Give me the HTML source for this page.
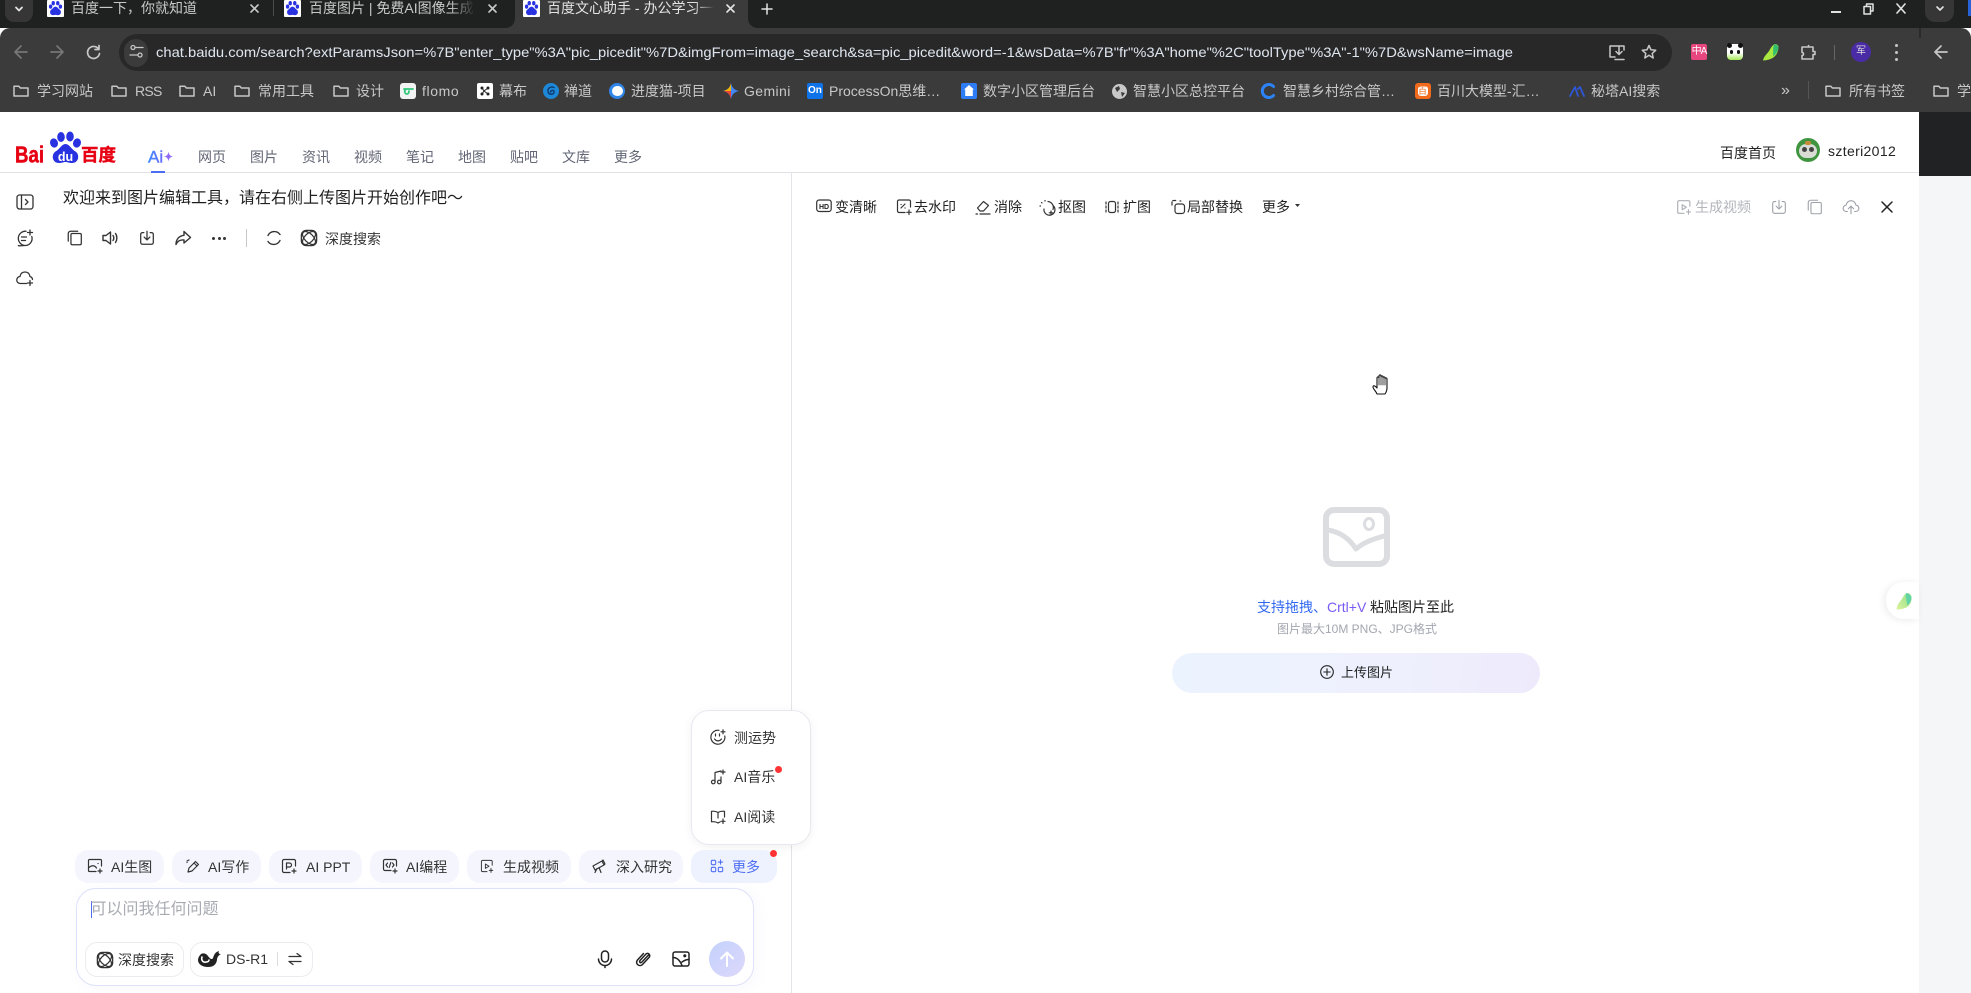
<!DOCTYPE html>
<html lang="zh"><head><meta charset="utf-8"><title>百度文心助手</title>
<style>
html,body{margin:0;padding:0;width:1971px;height:993px;overflow:hidden;background:#fff}
body{position:relative;font:14px/20px "Liberation Sans","Noto Sans CJK SC",sans-serif;color:#1f1f1f}
.b,.t,svg.i{position:absolute}
.t{white-space:nowrap;line-height:20px}
.c{color:#c8c8c8}
.w{color:#333}
.g{fill:none;stroke:#c7c7c7;stroke-width:1.5}
svg.i{fill:none;stroke:#333;stroke-width:1.4;stroke-linecap:round;stroke-linejoin:round;overflow:visible}
.pill{position:absolute;top:850px;height:33px;border-radius:13px;background:#f5f6fd}
</style></head><body>
<svg width="0" height="0" style="position:absolute">
<defs>
<symbol id="paw" viewBox="0 0 18 18"><rect width="18" height="18" rx="1" fill="#fff" stroke="none"/><g fill="#2932e1" stroke="none"><ellipse cx="3.8" cy="7" rx="1.8" ry="2.2"/><ellipse cx="6.6" cy="3.4" rx="1.8" ry="2.3"/><ellipse cx="11.4" cy="3.4" rx="1.8" ry="2.3"/><ellipse cx="14.2" cy="7" rx="1.8" ry="2.2"/><path d="M9 7c2 0 2.700 2 4.500 3.200 1.800 1.300 1.800 5.300-1.200 5.800-1.500.2-2-.3-3.300-.3s-1.800.5-3.300.3c-3-.5-3-4.500-1.200-5.800C6.300 9 7 7 9 7z"/></g></symbol>
<symbol id="folder" viewBox="0 0 18 18"><path class="g" d="M2 4.200h4.800l1.600 1.800H16v8H2z" stroke-linejoin="round"/></symbol>
<symbol id="copy" viewBox="0 0 20 20"><rect x="5.500" y="5" width="11.500" height="12.500" rx="1.500"/><path d="M2.500 13.500V5a2.500 2.500 0 0 1 2.500-2.500H13"/></symbol>
<symbol id="dl" viewBox="0 0 20 20"><path d="M6.500 4H5a2 2 0 0 0-2 2v9a2 2 0 0 0 2 2h10a2 2 0 0 0 2-2V6a2 2 0 0 0-2-2h-1.500M10 2.500v9.500M6.800 9l3.200 3.200L13.200 9"/></symbol>
<symbol id="up" viewBox="0 0 20 20"><path d="M6 15H5a3.500 3.500 0 0 1-.5-7C5 5 7.300 3 10 3s5 2 5.500 5a3.500 3.500 0 0 1-.5 7h-1M10 17.500V9.500M7 12l3-3 3 3"/></symbol>
<symbol id="deep" viewBox="0 0 20 20"><rect x="1.500" y="1.500" width="17" height="17" rx="5.500"/><ellipse cx="10" cy="10" rx="9" ry="4.800" transform="rotate(45 10 10)"/><ellipse cx="10" cy="10" rx="9" ry="4.800" transform="rotate(-45 10 10)"/></symbol>
<symbol id="video" viewBox="0 0 20 20"><path d="M16.500 9V4.500a1.500 1.500 0 0 0-1.500-1.500H4.500A1.500 1.500 0 0 0 3 4.500v11A1.500 1.500 0 0 0 4.500 17H10"/><path d="M8 7.500l4.500 2.800L8 13z"/><path d="M15 13v5M12.800 15.500h4.400" stroke-width="1.200"/></symbol>
</defs>
</svg>

<!-- chrome bars -->
<div class="b" style="left:0;top:0;width:1971px;height:28px;background:#1f2120"></div>
<div class="b" style="left:0;top:28px;width:1971px;height:84px;background:#3b3b3b;border-radius:10px 10px 0 0"></div>
<div class="b" style="left:1919px;top:28px;width:2px;height:10px;background:#2a2b2b"></div>
<div class="b" style="left:5px;top:0;width:28px;height:22px;background:#363636;border-radius:0 0 9px 9px"></div>
<svg class="i" style="left:14px;top:4px;stroke:#e3e3e3;stroke-width:1.800" width="10" height="10" viewBox="0 0 10 10"><path d="M2 3.500l3 3 3-3"/></svg>

<!-- active tab -->
<div class="b" style="left:515px;top:0;width:233px;height:28px;background:#3b3b3b"></div>
<svg class="i" style="left:505px;top:18px;stroke:none;fill:#3b3b3b" width="10" height="10"><path d="M10 0v10H0C6 10 10 6 10 0z"/></svg>
<svg class="i" style="left:748px;top:18px;stroke:none;fill:#3b3b3b" width="10" height="10"><path d="M0 0v10h10C4 10 0 6 0 0z"/></svg>

<svg class="i" style="left:47px;top:0" width="17" height="17"><use href="#paw"/></svg>
<span class="t c" style="left:71px;top:-2px">百度一下，你就知道</span>
<svg class="i" style="left:250px;top:4px;stroke:#c8c8c8;stroke-width:1.600" width="9" height="9"><path d="M1 1l7 7M8 1L1 8"/></svg>
<div class="b" style="left:273px;top:0;width:1px;height:16px;background:#4a4a4a"></div>
<svg class="i" style="left:284px;top:0" width="17" height="17"><use href="#paw"/></svg>
<span class="t c" style="left:309px;top:-2px;width:165px;overflow:hidden">百度图片 | 免费AI图像生成式</span>
<div class="b" style="left:450px;top:0;width:25px;height:20px;background:linear-gradient(90deg,rgba(31,33,32,0),#1f2120)"></div>
<svg class="i" style="left:488px;top:4px;stroke:#c8c8c8;stroke-width:1.600" width="9" height="9"><path d="M1 1l7 7M8 1L1 8"/></svg>
<svg class="i" style="left:523px;top:0" width="17" height="17"><use href="#paw"/></svg>
<span class="t" style="left:547px;top:-2px;color:#e3e3e3;width:166px;overflow:hidden">百度文心助手 - 办公学习一站</span>
<div class="b" style="left:694px;top:0;width:20px;height:20px;background:linear-gradient(90deg,rgba(59,59,59,0),#3b3b3b)"></div>
<svg class="i" style="left:726px;top:4px;stroke:#e3e3e3;stroke-width:1.600" width="9" height="9"><path d="M1 1l7 7M8 1L1 8"/></svg>
<svg class="i" style="left:762px;top:4px;stroke:#e3e3e3;stroke-width:1.500" width="10" height="10"><path d="M5 0v10M0 5h10"/></svg>

<!-- window controls -->
<div class="b" style="left:1831px;top:11px;width:10px;height:2px;background:#e3e3e3"></div>
<svg class="i" style="left:1863px;top:3px;stroke:#e3e3e3;stroke-width:1.500" width="11" height="12"><path d="M3.500 2.500V1h6.500v7H8M1 3.500h6.500v7.500H1z"/></svg>
<svg class="i" style="left:1896px;top:3px;stroke:#e3e3e3;stroke-width:1.600" width="10" height="11"><path d="M1 1l8 9M9 1l-8 9"/></svg>
<div class="b" style="left:1925px;top:0;width:29px;height:22px;background:#363636;border-radius:0 0 10px 10px"></div>
<svg class="i" style="left:1935px;top:4px;stroke:#e3e3e3;stroke-width:1.600" width="10" height="10"><path d="M2 3l3 3 3-3"/></svg>
<div class="b" style="left:1968px;top:0;width:3px;height:16px;background:#2862d9"></div>

<!-- toolbar -->
<svg class="i" style="left:13px;top:44px;stroke:#777;stroke-width:1.700" width="16" height="16"><path d="M14 8H2M8 2L2 8l6 6"/></svg>
<svg class="i" style="left:49px;top:44px;stroke:#777;stroke-width:1.700" width="16" height="16"><path d="M2 8h12M8 2l6 6-6 6"/></svg>
<svg class="i" style="left:85px;top:44px;stroke:#c7c7c7;stroke-width:1.700" width="16" height="16"><path d="M13.500 5A6 6 0 1 0 14.500 9.500M14 1.500V5.500H10"/></svg>
<div class="b" style="left:119px;top:34px;width:1553px;height:37px;background:#282828;border-radius:19px"></div>
<div class="b" style="left:124px;top:39px;width:24px;height:28px;background:#3b3b3b;border-radius:13px"></div>
<svg class="i" style="left:129px;top:44px;stroke:#c7c7c7;stroke-width:1.300" width="15" height="15"><circle cx="4" cy="3.500" r="2"/><path d="M7 3.500h7M1 11h7"/><circle cx="11" cy="11" r="2"/></svg>
<svg class="b" style="left:156px;top:42px;overflow:visible" width="1357" height="20"><text x="0" y="15" textLength="1357" lengthAdjust="spacingAndGlyphs" font-size="14" fill="#dfe6f0" font-family="Liberation Sans,sans-serif">chat.baidu.com/search?extParamsJson=%7B"enter_type"%3A"pic_picedit"%7D&amp;imgFrom=image_search&amp;sa=pic_picedit&amp;word=-1&amp;wsData=%7B"fr"%3A"home"%2C"toolType"%3A"-1"%7D&amp;wsName=image</text></svg>
<svg class="i" style="left:1608px;top:43px;stroke:#c7c7c7;stroke-width:1.500" width="18" height="18"><path d="M16 7V3H2v11h5M11 3v8M8 8.500l3 3 3-3M7 16.500h9"/></svg>
<svg class="i" style="left:1641px;top:44px;stroke:#c7c7c7;stroke-width:1.500" width="16" height="16"><path d="M8 1.500l2 4.300 4.700.5-3.500 3.100 1 4.600L8 11.300l-4.200 2.700 1-4.600L1.300 6.300 6 5.800z"/></svg>
<div class="b" style="left:1691px;top:44px;width:16px;height:16px;border-radius:2px;background:#e8467f"></div>
<span class="t" style="left:1691px;top:42px;width:16px;text-align:center;font-size:10px;color:#fff;letter-spacing:-1px">中A</span>
<div class="b" style="left:1727px;top:44px;width:16px;height:16px;border-radius:4px;background:linear-gradient(#fff 55%,#a6ea58)"></div>
<div class="b" style="left:1727px;top:43px;width:5px;height:5px;border-radius:3px;background:#111"></div>
<div class="b" style="left:1738px;top:43px;width:5px;height:5px;border-radius:3px;background:#111"></div>
<div class="b" style="left:1730px;top:50px;width:3px;height:4px;border-radius:2px;background:#111"></div>
<div class="b" style="left:1737px;top:50px;width:3px;height:4px;border-radius:2px;background:#111"></div>
<svg class="i" style="left:1763px;top:43px;stroke:none" width="16" height="18" viewBox="0 0 16 18"><path d="M0 17.500C1 13 4 11 6 8c2-3 3-6 6-7 2 0 4 2 3.500 3-.5 8-5 13-15.500 13.500z" fill="#a8e83f"/><path d="M11 1.200c2-.3 4.500 1.800 4.500 3-.5 4-2.500 7-5.500 9 .5-4-.5-8 1-12z" fill="#35bd6e"/></svg>
<svg class="i" style="left:1800px;top:44px;stroke:#c7c7c7;stroke-width:1.600" width="16" height="16"><path d="M5 3h3.500v-1.500M8.500 3H13v4.500h2v3h-2V15H2v-3.500c2 0 2-3 0-3V3z" /></svg>
<div class="b" style="left:1834px;top:45px;width:1px;height:15px;background:#666"></div>
<div class="b" style="left:1851px;top:42px;width:20px;height:20px;border-radius:10px;background:#4a2ba6"></div>
<span class="t" style="left:1851px;top:42px;width:20px;text-align:center;font-size:10px;color:#ddd">军</span>
<div class="b" style="left:1895px;top:44px;width:3px;height:3px;border-radius:2px;background:#c7c7c7"></div>
<div class="b" style="left:1895px;top:51px;width:3px;height:3px;border-radius:2px;background:#c7c7c7"></div>
<div class="b" style="left:1895px;top:58px;width:3px;height:3px;border-radius:2px;background:#c7c7c7"></div>
<svg class="i" style="left:1934px;top:45px;stroke:#c7c7c7;stroke-width:1.700" width="14" height="14"><path d="M13 7H1M7 1L1 7l6 6"/></svg>

<!-- bookmarks -->
<svg class="i" style="left:12px;top:82px;stroke:none" width="18" height="18"><use href="#folder"/></svg><span class="t c" style="left:37px;top:81px">学习网站</span>
<svg class="i" style="left:110px;top:82px;stroke:none" width="18" height="18"><use href="#folder"/></svg><span class="t c" style="left:135px;top:81px;letter-spacing:-.7px">RSS</span>
<svg class="i" style="left:178px;top:82px;stroke:none" width="18" height="18"><use href="#folder"/></svg><span class="t c" style="left:203px;top:81px">AI</span>
<svg class="i" style="left:233px;top:82px;stroke:none" width="18" height="18"><use href="#folder"/></svg><span class="t c" style="left:258px;top:81px">常用工具</span>
<svg class="i" style="left:332px;top:82px;stroke:none" width="18" height="18"><use href="#folder"/></svg><span class="t c" style="left:356px;top:81px">设计</span>
<div class="b" style="left:400px;top:83px;width:16px;height:16px;border-radius:3px;background:#f2f2f2"></div><svg class="i" style="left:402px;top:86px;stroke:#30c77b;stroke-width:1.800" width="12" height="10"><path d="M2 3h9M5 3c-3 0-3 5 0 5M5 8c1 0 2-1 2-3"/></svg>
<span class="t c" style="left:422px;top:81px;letter-spacing:.6px">flomo</span>
<div class="b" style="left:477px;top:83px;width:16px;height:16px;border-radius:2px;background:#fff"></div><svg class="i" style="left:480px;top:86px;stroke:#222;stroke-width:1" width="10" height="10"><path d="M2 2l2 3 4-3M2 8l2-3 4 3"/><circle cx="2" cy="2" r="1" fill="#222"/><circle cx="8" cy="2" r="1" fill="#222"/><circle cx="2" cy="8" r="1" fill="#222"/><circle cx="8" cy="8" r="1" fill="#222"/></svg>
<span class="t c" style="left:499px;top:81px">幕布</span>
<div class="b" style="left:543px;top:83px;width:16px;height:16px;border-radius:8px;background:#1d88d8"></div><svg class="i" style="left:545px;top:85px;stroke:#0f3d72;stroke-width:1.500" width="12" height="12"><path d="M9 2.500C6 1 2.500 3 3 6.500S8 10 9 7.500 6 4.500 5.500 7"/></svg>
<span class="t c" style="left:564px;top:81px">禅道</span>
<div class="b" style="left:609px;top:83px;width:16px;height:16px;border-radius:8px;background:#2f85e8"></div><div class="b" style="left:612px;top:86px;width:11px;height:10px;border-radius:6px;background:#fff"></div>
<span class="t c" style="left:631px;top:81px">进度猫-项目</span>
<svg class="i" style="left:723px;top:83px;stroke:none" width="16" height="16"><path d="M8 0C8.800 4.500 11.500 7.200 16 8 11.500 8.800 8.800 11.500 8 16 7.200 11.500 4.500 8.800 0 8 4.500 7.200 7.200 4.500 8 0z" fill="#4285f4"/><path d="M0 8C4.500 7.200 7.200 4.500 8 0V8z" fill="#f4b400"/><path d="M0 8C4.500 8.800 7.200 11.500 8 16V8z" fill="#ea4335"/></svg>
<span class="t c" style="left:744px;top:81px;letter-spacing:.4px">Gemini</span>
<div class="b" style="left:807px;top:83px;width:16px;height:16px;border-radius:2px;background:#0e73e8"></div><span class="t" style="left:808px;top:81px;font-size:10px;font-weight:700;color:#fff">On</span>
<span class="t c" style="left:829px;top:81px">ProcessOn思维…</span>
<div class="b" style="left:961px;top:83px;width:16px;height:16px;border-radius:2px;background:#2e7cf6"></div><svg class="i" style="left:964px;top:85px;stroke:none;fill:#fff" width="10" height="12"><path d="M5 0l5 4.500H8.800V11H1.200V4.500H0z"/></svg>
<span class="t c" style="left:983px;top:81px">数字小区管理后台</span>
<div class="b" style="left:1112px;top:84px;width:15px;height:15px;border-radius:8px;background:#c9c9c9"></div><svg class="i" style="left:1112px;top:84px;stroke:none;fill:#3b3b3b" width="15" height="15"><path d="M3 4l4-2 1 3-3 3zM9 8l4 1-3 4z"/></svg>
<span class="t c" style="left:1133px;top:81px">智慧小区总控平台</span>
<svg class="i" style="left:1261px;top:83px;stroke:#2b83f6;stroke-width:3" width="16" height="16"><path d="M12.500 3.500A6.500 6.500 0 1 0 12.500 12.500"/></svg>
<span class="t c" style="left:1283px;top:81px">智慧乡村综合管…</span>
<div class="b" style="left:1415px;top:83px;width:16px;height:16px;border-radius:3px;background:#f26b1d"></div><div class="b" style="left:1418px;top:86px;width:10px;height:10px;border-radius:3px;background:#fff"></div><span class="t" style="left:1418px;top:81px;font-size:9px;color:#f26b1d">百</span>
<span class="t c" style="left:1437px;top:81px">百川大模型-汇…</span>
<svg class="i" style="left:1569px;top:85px;stroke:#2f56d9;stroke-width:1.800" width="16" height="12"><path d="M1 11L6 2l3 9M9 4l2-2 4 9"/></svg>
<span class="t c" style="left:1591px;top:81px">秘塔AI搜索</span>
<span class="t c" style="left:1781px;top:81px;font-size:16px">»</span>
<div class="b" style="left:1808px;top:81px;width:1px;height:18px;background:#555"></div>
<svg class="i" style="left:1824px;top:82px;stroke:none" width="18" height="18"><use href="#folder"/></svg><span class="t c" style="left:1849px;top:81px">所有书签</span>
<svg class="i" style="left:1932px;top:82px;stroke:none" width="18" height="18"><use href="#folder"/></svg><span class="t c" style="left:1957px;top:81px">学习</span>

<!-- right outside page -->
<div class="b" style="left:1919px;top:112px;width:52px;height:64px;background:#212224"></div>
<div class="b" style="left:1919px;top:176px;width:52px;height:817px;background:#f5f6f8"></div>

<!-- header -->
<div class="b" style="left:0;top:172px;width:1919px;height:1px;background:#e1e2e6"></div>
<div class="b" style="left:791px;top:173px;width:1px;height:820px;background:#e3e4e8"></div>
<svg class="b" style="left:12px;top:128px;overflow:visible" width="110" height="40">
<text x="3" y="34.500" font-size="23" font-weight="700" fill="#e60012" stroke="#e60012" stroke-width=".5" font-family="Liberation Sans,sans-serif" textLength="29" lengthAdjust="spacingAndGlyphs">Bai</text>
<g fill="#2932e1"><ellipse cx="42" cy="15" rx="3.900" ry="4.700" transform="rotate(-20 42 15)"/><ellipse cx="49" cy="9" rx="3.800" ry="5"/><ellipse cx="58" cy="8.500" rx="3.800" ry="5"/><ellipse cx="65" cy="15" rx="3.900" ry="4.700" transform="rotate(20 65 15)"/><path d="M53.500 16c4 0 5.500 5 10 7.500 4.500 3 3.500 11.500-3.500 11.500-3 0-4.500-1-6.500-1s-3.500 1-6.500 1c-7 0-8-8.500-3.500-11.500 4.500-2.500 6-7.500 10-7.500z"/></g>
<text x="53.500" y="33" font-size="12.500" font-weight="700" fill="#fff" text-anchor="middle" font-family="Liberation Sans,sans-serif">du</text>
<text x="69" y="33" font-size="17.500" font-weight="700" fill="#e60012" stroke="#e60012" stroke-width=".4" font-family="Noto Sans CJK SC,sans-serif">百度</text>
</svg>
<svg class="b" style="left:148px;top:146px;overflow:visible" width="26" height="20"><defs><linearGradient id="ai" x1="0" x2="1"><stop offset="0" stop-color="#3d8bff"/><stop offset="1" stop-color="#6a6cff"/></linearGradient></defs><text x="0" y="16.500" font-size="17" fill="url(#ai)" stroke="url(#ai)" stroke-width=".4" font-family="Liberation Sans,sans-serif">Ai</text><path d="M20.500 5.500c.4 3 1.500 4.500 4.500 5-3 .5-4.100 2-4.500 5-.4-3-1.500-4.500-4.500-5 3-.5 4.100-2 4.500-5z" fill="#8f6cf7"/></svg>
<div class="b" style="left:151px;top:171px;width:14px;height:2px;background:#4e6ef2"></div>
<span class="t" style="left:198px;top:146.500px;color:#626675">网页</span>
<span class="t" style="left:250px;top:146.500px;color:#626675">图片</span>
<span class="t" style="left:302px;top:146.500px;color:#626675">资讯</span>
<span class="t" style="left:354px;top:146.500px;color:#626675">视频</span>
<span class="t" style="left:406px;top:146.500px;color:#626675">笔记</span>
<span class="t" style="left:458px;top:146.500px;color:#626675">地图</span>
<span class="t" style="left:510px;top:146.500px;color:#626675">贴吧</span>
<span class="t" style="left:562px;top:146.500px;color:#626675">文库</span>
<span class="t" style="left:614px;top:146.500px;color:#626675">更多</span>
<span class="t w" style="left:1720px;top:143px;color:#222">百度首页</span>
<div class="b" style="left:1796px;top:138px;width:24px;height:24px;border-radius:12px;background:#3f9440"></div>
<div class="b" style="left:1799px;top:144px;width:18px;height:14px;border-radius:7px;background:#d8dcd4"></div>
<div class="b" style="left:1805px;top:141px;width:6px;height:4px;border-radius:2px;background:#c8893a"></div>
<div class="b" style="left:1802px;top:147px;width:5px;height:5px;border-radius:3px;background:#444"></div>
<div class="b" style="left:1809px;top:147px;width:5px;height:5px;border-radius:3px;background:#444"></div>
<span class="t" style="left:1828px;top:141px;color:#222;letter-spacing:.35px">szteri2012</span>

<!-- left sidebar icons -->
<svg class="i" style="left:16px;top:193px;stroke-width:1.300" width="18" height="18" viewBox="0 0 18 18"><rect x="1" y="2" width="16" height="14" rx="2.500"/><path d="M5.500 2v14M9.500 6.500L12 9l-2.500 2.500"/></svg>
<svg class="i" style="left:16px;top:229px;stroke-width:1.300" width="18" height="18" viewBox="0 0 18 18"><path d="M10 2.200A7 7 0 1 0 9 16.500L3 16.800l-.6-.2M15.800 7.500A7 7 0 0 1 9 16.500M5.500 8h5M5.500 11.500h4M14 1v5M11.500 3.500h5"/></svg>
<svg class="i" style="left:16px;top:269px;stroke-width:1.300" width="18" height="18" viewBox="0 0 18 18"><path d="M10.500 14.500H4.500a3.500 3.500 0 0 1-.5-7C4.500 4.500 6.500 3 9 3s4.500 1.500 5 4.500a3.500 3.500 0 0 1 2.500 3M14 11.500v5M11.500 14h5"/></svg>

<!-- msg -->
<span class="t" style="left:63px;top:189px;font-size:16px;color:#1f1f1f">欢迎来到图片编辑工具，请在右侧上传图片开始创作吧～</span>
<svg class="i" style="left:66px;top:229px" width="18" height="18" viewBox="0 0 20 20"><use href="#copy"/></svg>
<svg class="i" style="left:101px;top:229px" width="18" height="18" viewBox="0 0 18 18"><path d="M2 6.500h3L9.500 3v12L5 11.500H2zM12 6.500c1 1.500 1 3.500 0 5M14.500 4.500c1.800 2.500 1.800 6.500 0 9"/></svg>
<svg class="i" style="left:138px;top:229px" width="18" height="18" viewBox="0 0 20 20"><use href="#dl"/></svg>
<svg class="i" style="left:174px;top:229px" width="18" height="18" viewBox="0 0 18 18"><path d="M10 2.500l6.500 6-6.500 5.500v-3C6 10.500 3.500 12 2 15.500 2 10.500 5 6.800 10 6.300z"/></svg>
<div class="b" style="left:212px;top:237px;width:3px;height:3px;border-radius:2px;background:#333"></div>
<div class="b" style="left:217.500px;top:237px;width:3px;height:3px;border-radius:2px;background:#333"></div>
<div class="b" style="left:223px;top:237px;width:3px;height:3px;border-radius:2px;background:#333"></div>
<div class="b" style="left:246px;top:229px;width:1px;height:18px;background:#c8c8cc"></div>
<svg class="i" style="left:265px;top:229px" width="18" height="18" viewBox="0 0 18 18"><path d="M15 5.500A7 7 0 0 0 3 6.500M3 12.500A7 7 0 0 0 15 11.500"/></svg>
<svg class="i" style="left:300px;top:229px" width="18" height="18" viewBox="0 0 20 20"><use href="#deep"/></svg>
<span class="t" style="left:325px;top:229px;color:#333">深度搜索</span>

<!-- right toolbar -->
<svg class="i" style="left:816px;top:199px;stroke-width:1.200" width="16" height="14" viewBox="0 0 16 14"><rect x=".7" y="1" width="14.500" height="11.500" rx="2.500"/><text x="8" y="9.800" font-size="7" font-weight="700" text-anchor="middle" fill="#222" stroke="none" font-family="Liberation Sans,sans-serif">HD</text></svg>
<span class="t" style="left:835px;top:197px;color:#222">变清晰</span>
<svg class="i" style="left:896px;top:199px;stroke-width:1.200" width="16" height="16" viewBox="0 0 16 16"><path d="M14.500 8V2.500a1.500 1.500 0 0 0-1.500-1.500H3A1.500 1.500 0 0 0 1.500 2.500v9.500A1.500 1.500 0 0 0 3 13.500h6M5 9l4-4M9 9h.1M5 5.500h.1M13 11v4.500M10.800 13.300h4.400"/></svg>
<span class="t" style="left:914px;top:197px;color:#222">去水印</span>
<svg class="i" style="left:975px;top:199px;stroke-width:1.200" width="16" height="16" viewBox="0 0 16 16"><path d="M2.500 9l6-6.500 5 4-5 5.500H5zM1 15h1.500M5 15h10"/></svg>
<span class="t" style="left:994px;top:197px;color:#222">消除</span>
<svg class="i" style="left:1039px;top:199px;stroke-width:1.200" width="16" height="16" viewBox="0 0 16 16"><path d="M3 4l-.5-.5M1.500 7h-.5M6 2V1.500M9 2.500a6 6 0 0 1 5 8M14 6.500a5.500 5.500 0 1 1-9 3.500"/><path d="M12 12v3.500M10.300 13.800h3.500"/></svg>
<span class="t" style="left:1058px;top:197px;color:#222">抠图</span>
<svg class="i" style="left:1104px;top:199px;stroke-width:1.200" width="16" height="16" viewBox="0 0 16 16"><rect x="4.500" y="2.500" width="7" height="11" rx="2"/><path d="M2 3v10M14 3v10" stroke-dasharray="2 2"/></svg>
<span class="t" style="left:1123px;top:197px;color:#222">扩图</span>
<svg class="i" style="left:1170px;top:199px;stroke-width:1.200" width="16" height="16" viewBox="0 0 16 16"><rect x="5" y="5" width="9.500" height="9.500" rx="2.500"/><path d="M2 6V3a1.500 1.500 0 0 1 1.500-1.500H7M10 2h.8" stroke-dasharray="3 1.500"/></svg>
<span class="t" style="left:1187px;top:197px;color:#222">局部替换</span>
<span class="t" style="left:1262px;top:197px;color:#222">更多</span>
<svg class="i" style="left:1295px;top:204px;stroke:none;fill:#333" width="5" height="3"><path d="M0 0h5L2.500 3z"/></svg>
<svg class="i" style="left:1675px;top:198px;stroke:#aeb0b8;stroke-width:1.300" width="18" height="18" viewBox="0 0 20 20"><use href="#video"/></svg>
<span class="t" style="left:1695px;top:197px;color:#b4b6bd">生成视频</span>
<svg class="i" style="left:1770px;top:198px;stroke:#9da0a8;stroke-width:1.200" width="18" height="18" viewBox="0 0 20 20"><use href="#dl"/></svg>
<svg class="i" style="left:1806px;top:198px;stroke:#9da0a8;stroke-width:1.200" width="18" height="18" viewBox="0 0 20 20"><use href="#copy"/></svg>
<svg class="i" style="left:1842px;top:198px;stroke:#9da0a8;stroke-width:1.200" width="18" height="18" viewBox="0 0 20 20"><use href="#up"/></svg>
<svg class="i" style="left:1881px;top:201px;stroke:#222;stroke-width:1.500" width="12" height="12"><path d="M1 1l10 10M11 1L1 11"/></svg>

<!-- cursor -->
<svg class="i" style="left:1372px;top:373px;stroke:#111;stroke-width:1.100;fill:#fff" width="20" height="24" viewBox="0 0 20 24"><path d="M5 21c-1-3-4-5-4-7 0-1.500 1.500-1.500 2.500-.5L5 15V5c0-1.500 2-1.500 2 0V3c0-1.500 2-1.500 2 0v1c0-1.500 2-1.500 2 0v1c0-1.500 2-1.500 2 0v1c0-1.500 2-1.500 2 0v9c0 3-1 4.500-2 6z"/><path d="M7 5v7M9 4v8M11 5v7M13 6v6" fill="none" stroke-width=".8"/></svg>

<!-- empty state -->
<svg class="i" style="left:1323px;top:507px;stroke:#dcdde1;stroke-width:6" width="67" height="60" viewBox="0 0 67 60"><rect x="3" y="3" width="61" height="54" rx="8"/><path d="M5 23c12 2 21 8 28 19 7-6 14-9 28-13" stroke-width="5"/><ellipse cx="46" cy="17" rx="4.500" ry="5.500" stroke-width="3"/></svg>
<span class="t" style="left:1257px;top:597px;color:#3369f0">支持拖拽、</span>
<span class="t" style="left:1327px;top:597px;color:#7a5af5">Crtl+V</span>
<span class="t" style="left:1370px;top:597px;color:#222">粘贴图片至此</span>
<span class="t" style="left:1277px;top:619px;font-size:12px;color:#a3a6af">图片最大10M PNG、JPG格式</span>
<div class="b" style="left:1172px;top:653px;width:368px;height:40px;border-radius:20px;background:linear-gradient(100deg,#ebf3ff 0%,#eef1fd 55%,#eeeafc 100%)"></div>
<svg class="i" style="left:1320px;top:665px;stroke-width:1.100;stroke:#222" width="14" height="14"><circle cx="7" cy="7" r="6.300"/><path d="M7 3.800v6.400M3.800 7h6.400"/></svg>
<span class="t" style="left:1341px;top:663px;font-size:13px;color:#222">上传图片</span>
<div class="b" style="left:1886px;top:582px;width:33px;height:37px;background:#fff;border-radius:18px 0 0 18px;box-shadow:-2px 1px 8px rgba(0,0,0,.08)"></div>
<svg class="i" style="left:1896px;top:592px;stroke:none" width="17" height="18" viewBox="0 0 16 18"><defs><linearGradient id="lf" x1="0" y1="1" x2="1" y2="0"><stop offset="0" stop-color="#dcf29a"/><stop offset="1" stop-color="#8ee08a"/></linearGradient></defs><path d="M0 17.500C.5 12 4 9.500 6 6c1.500-2.500 3-5 5-5s4.500 3 4 5c0 7.500-5 11.500-15 11.500z" fill="url(#lf)"/><path d="M9.500 1.300c2.500-.5 5.500 2.500 5.500 4.700-.5 3.500-2 6-4.500 7.200C10.500 9 9 5 9.500 1.300z" fill="#62d3a4"/></svg>

<!-- popup -->
<div class="b" style="left:691px;top:710px;width:118px;height:133px;border:1px solid #e8e9ef;border-radius:18px;background:#fff;box-shadow:0 2px 10px rgba(0,0,0,.06)"></div>
<svg class="i" style="left:710px;top:729px;stroke-width:1.200" width="16" height="16" viewBox="0 0 16 16"><path d="M9 1.300A7 7 0 1 0 14.800 7M5.500 5v2M9.500 5v2M4.500 10c2 2.500 5 2.500 7 0M13 .8v4M11 2.800h4"/></svg>
<span class="t" style="left:734px;top:728px;color:#333">测运势</span>
<svg class="i" style="left:710px;top:769px;stroke-width:1.200" width="16" height="16" viewBox="0 0 16 16"><path d="M5 13V3.500l6-1.500M11 8v5"/><circle cx="3.300" cy="13" r="1.800"/><circle cx="9.300" cy="13" r="1.800"/><path d="M13 1v4M11 3h4"/></svg>
<span class="t" style="left:734px;top:767px;color:#333">AI音乐</span>
<div class="b" style="left:775px;top:766px;width:7px;height:7px;border-radius:4px;background:#f33"></div>
<svg class="i" style="left:710px;top:809px;stroke-width:1.200" width="16" height="16" viewBox="0 0 16 16"><path d="M8 3.500C6.500 2.500 4 2 1.500 2.300v10.500C4 12.500 6.500 13 8 14c.6-.4 1.300-.7 2-.9M8 3.500c1.500-1 4-1.500 6.500-1.200V8M8 3.500V9M13 10v4.500M11 12.300h4"/></svg>
<span class="t" style="left:734px;top:807px;color:#333">AI阅读</span>

<!-- pills -->
<div class="pill" style="left:75px;width:89px"></div>
<div class="pill" style="left:172px;width:89px"></div>
<div class="pill" style="left:269px;width:93px"></div>
<div class="pill" style="left:370px;width:89px"></div>
<div class="pill" style="left:467px;width:104px"></div>
<div class="pill" style="left:579px;width:104px"></div>
<div class="pill" style="left:691px;width:86px;background:#eef2fe"></div>
<svg class="i" style="left:87px;top:858px;stroke-width:1.200" width="16" height="16" viewBox="0 0 16 16"><path d="M14.500 8V2.500a1 1 0 0 0-1-1h-11a1 1 0 0 0-1 1v10a1 1 0 0 0 1 1H9M1.500 10c3-3 6-3 8 0M11 5.500h.1M13 11v4M11 13h4"/></svg>
<span class="t" style="left:111px;top:856.500px;color:#333">AI生图</span>
<svg class="i" style="left:185px;top:858px;stroke-width:1.200" width="16" height="16" viewBox="0 0 16 16"><path d="M3 14l1-4 6.500-6.500 3 3L7 13zM9 5l3 3M2 3l2-1M2 4.500h.1"/></svg>
<span class="t" style="left:208px;top:856.500px;color:#333">AI写作</span>
<svg class="i" style="left:281px;top:858px;stroke-width:1.200" width="16" height="16" viewBox="0 0 16 16"><path d="M14.500 8V3a1.500 1.500 0 0 0-1.500-1.500H3A1.500 1.500 0 0 0 1.500 3v10A1.500 1.500 0 0 0 3 14.500h6M5.500 11V5h3a2 2 0 0 1 0 4h-3M13 11v4M11 13h4"/></svg>
<span class="t" style="left:306px;top:856.500px;color:#333">AI PPT</span>
<svg class="i" style="left:382px;top:858px;stroke-width:1.200" width="16" height="16" viewBox="0 0 16 16"><path d="M14.500 8V3a1.500 1.500 0 0 0-1.500-1.500H3A1.500 1.500 0 0 0 1.500 3v8A1.500 1.500 0 0 0 3 12.500h6M5.500 5L4 7l1.500 2M10.500 5L12 7l-1.500 2M8.800 4.500L7.200 9.500M13 11v4M11 13h4"/></svg>
<span class="t" style="left:406px;top:856.500px;color:#333">AI编程</span>
<svg class="i" style="left:479px;top:858px;stroke-width:1.200" width="16" height="16" viewBox="0 0 20 20"><use href="#video"/></svg>
<span class="t" style="left:503px;top:856.500px;color:#333">生成视频</span>
<svg class="i" style="left:591px;top:858px;stroke-width:1.200" width="16" height="16" viewBox="0 0 16 16"><path d="M2 8l9-5 2 4-9 5zM6 10.500l-2 4M8 9.500l2 5M11 3l1-1 2 4-1 1"/></svg>
<span class="t" style="left:616px;top:856.500px;color:#333">深入研究</span>
<svg class="i" style="left:710px;top:859px;stroke:#4e6ef2;stroke-width:1.200" width="14" height="14" viewBox="0 0 16 16"><rect x="1.500" y="1.500" width="5" height="5" rx="1.200"/><rect x="1.500" y="9.500" width="5" height="5" rx="1.200"/><rect x="9.500" y="9.500" width="5" height="5" rx="1.200"/><path d="M12 1v5M9.500 3.500h5"/></svg>
<span class="t" style="left:732px;top:857px;color:#4e6ef2">更多</span>
<div class="b" style="left:770px;top:850px;width:7px;height:7px;border-radius:4px;background:#f33"></div>

<!-- input -->
<div class="b" style="left:76px;top:888px;width:676px;height:96px;border:1px solid #dde1fa;border-radius:20px;background:#fff;box-shadow:3px 2px 14px rgba(130,140,255,.06)"></div>
<div class="b" style="left:91px;top:901px;width:1px;height:17px;background:#4e6ef2"></div>
<span class="t" style="left:90.500px;top:899.500px;font-size:16px;color:#a9abb3">可以问我任何问题</span>
<div class="b" style="left:85px;top:942px;width:97px;height:33px;border:1px solid #ececf0;border-radius:12px"></div>
<svg class="i" style="left:96px;top:951px" width="18" height="18" viewBox="0 0 20 20"><use href="#deep"/></svg>
<span class="t" style="left:118px;top:950px;color:#333">深度搜索</span>
<div class="b" style="left:190px;top:942px;width:121px;height:33px;border:1px solid #ececf0;border-radius:12px"></div>
<svg class="i" style="left:198px;top:950px;stroke:none;fill:#222" width="24" height="18" viewBox="0 0 24 18"><path d="M3 4c2-1 5-1 7 2 2 3 4 4 5 2 1-3 2-6 6-7-1 2 0 3 2 3-2 1-4 3-4 6-1 5-4 7-9 7-6 0-10-3-10-7 0-2 1-4 3-6z"/><path d="M4 7c-1 3 1 6 4 5 2 0 3-1 3-2" stroke="#fff" stroke-width="1.600" fill="none"/></svg>
<span class="t" style="left:226px;top:949px;color:#333">DS-R1</span>
<div class="b" style="left:277px;top:952px;width:1px;height:14px;background:#ddd"></div>
<svg class="i" style="left:288px;top:953px;stroke-width:1.300" width="14" height="12"><path d="M1 3.500h12M9 .5L13 3.500M13 8.500H1M5 11.500L1 8.500"/></svg>
<svg class="i" style="left:596px;top:950px;stroke-width:1.500;stroke:#222" width="18" height="18" viewBox="0 0 18 18"><rect x="5.500" y="1" width="7" height="11" rx="3.500"/><path d="M2.500 9a6.500 6.500 0 0 0 13 0M9 15.500V17.500"/></svg>
<svg class="i" style="left:634px;top:950px;stroke-width:1.500;stroke:#222" width="18" height="18" viewBox="0 0 18 18"><path d="M15 4.500L8 12c-1.500 1.500-3 0-2-1.500l6-6.500c2-2 5 1 3 3.500l-6.500 7c-3 3-8-1-5-4.500l6-6.500"/></svg>
<svg class="i" style="left:672px;top:950px;stroke-width:1.500;stroke:#222" width="18" height="18" viewBox="0 0 18 18"><rect x="1" y="2" width="16" height="14" rx="2"/><path d="M1 7.500c4 0 7 3 9 8M10 12c2-1.500 4.500-2.500 7-2.500"/><circle cx="12.800" cy="5.800" r=".8" fill="#222"/></svg>
<div class="b" style="left:709px;top:941px;width:36px;height:36px;border-radius:18px;background:linear-gradient(135deg,#c3d2fc,#ddd7fb)"></div>
<svg class="i" style="left:719px;top:951px;stroke:#fff;stroke-width:2" width="16" height="16"><path d="M8 15V1.500M2 7.500L8 1.500l6 6"/></svg>
</body></html>
